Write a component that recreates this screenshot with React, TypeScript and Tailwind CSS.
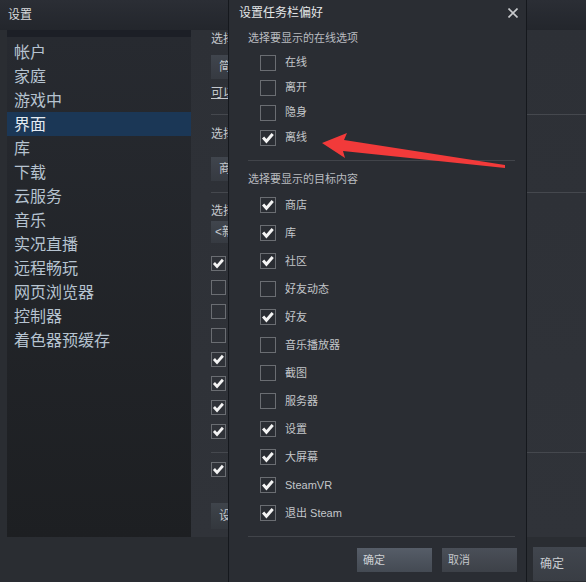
import React from "react";

const FONT = "font-['Liberation_Sans','Noto_Sans_CJK_SC',sans-serif]";

const sidebarItems = [
  "帐户",
  "家庭",
  "游戏中",
  "界面",
  "库",
  "下载",
  "云服务",
  "音乐",
  "实况直播",
  "远程畅玩",
  "网页浏览器",
  "控制器",
  "着色器预缓存",
];

const onlineOptions = [
  { label: "在线", checked: false },
  { label: "离开", checked: false },
  { label: "隐身", checked: false },
  { label: "离线", checked: true },
];

const targetOptions = [
  { label: "商店", checked: true },
  { label: "库", checked: true },
  { label: "社区", checked: true },
  { label: "好友动态", checked: false },
  { label: "好友", checked: true },
  { label: "音乐播放器", checked: false },
  { label: "截图", checked: false },
  { label: "服务器", checked: false },
  { label: "设置", checked: true },
  { label: "大屏幕", checked: true },
  { label: "SteamVR", checked: true },
  { label: "退出 Steam", checked: true },
];

const backChecks = [true, false, false, false, true, true, true, true];

const CheckBox: React.FC<{ checked: boolean; small?: boolean }> = ({
  checked,
  small,
}) => (
  <div
    className={`${
      small ? "w-[15px] h-[15px]" : "w-[16px] h-[16px]"
    } shrink-0 border border-[#6a6d72] flex items-center justify-center`}
  >
    {checked && (
      <svg viewBox="0 0 16 16" className="w-full h-full">
        <path
          d="M2.4 7.4 L6.2 11.6 L13.4 3.4"
          fill="none"
          stroke="#f4f4f4"
          strokeWidth="3.4"
          strokeLinejoin="miter"
        />
      </svg>
    )}
  </div>
);

const BackWindow: React.FC = () => (
  <div className="flex flex-col h-full">
    <div className="h-[30px] shrink-0 flex items-center px-[8px] text-[12px] text-[#d8dadd] bg-gradient-to-b from-[#2b2e35] to-[#23262c]">
      设置
    </div>
    <div className="flex flex-1 min-h-0">
      <div className="ml-[7px] w-[184px] shrink-0 flex flex-col border-t-[7px] border-[#1c1f26] bg-gradient-to-b from-[#272a30] to-[#1d1f22] pt-[3px]">
        {sidebarItems.map((item) => (
          <div
            key={item}
            className={`h-[24px] flex items-center px-[7px] pt-[2px] text-[16px] leading-none ${
              item === "界面"
                ? "bg-[#1b3756] text-[#e4ebf2]"
                : "text-[#b6c3d0]"
            }`}
          >
            {item}
          </div>
        ))}
      </div>
      <div className="flex-1 min-w-0 bg-gradient-to-b from-[#2d3036] to-[#303339] pl-[20px] flex flex-col text-[12px] text-[#c4c8cc] overflow-hidden">
        <div className="h-[18px] flex items-center">选择</div>
        <div className="mt-[7px] h-[24px] w-[300px] flex items-center pl-[8px] bg-gradient-to-b from-[#40454d] to-[#363a41]">
          简体
        </div>
        <div className="mt-[7px] h-[14px] flex items-center underline">
          可以
        </div>
        <div className="mt-[14px] h-px bg-[#45484e]" />
        <div className="mt-[10px] h-[18px] flex items-center">选择</div>
        <div className="mt-[14px] h-[24px] w-[300px] flex items-center pl-[8px] bg-gradient-to-b from-[#40454d] to-[#363a41]">
          商店
        </div>
        <div className="mt-[11px] h-px bg-[#45484e]" />
        <div className="mt-[9px] h-[18px] flex items-center">选择</div>
        <div className="mt-px h-[22px] w-[300px] flex items-center pl-[4px] bg-gradient-to-b from-[#40454d] to-[#363a41]">
          &lt;新
        </div>
        <div className="mt-[8px] flex flex-col">
          {backChecks.map((c, i) => (
            <div key={i} className="h-[24px] flex items-center">
              <CheckBox checked={c} small />
            </div>
          ))}
        </div>
        <div className="mt-[9px] h-px bg-[#45484e]" />
        <div className="mt-[4px] h-[24px] flex items-center">
          <CheckBox checked small />
        </div>
        <div className="mt-[22px] h-[26px] w-[200px] flex items-center pl-[8px] bg-gradient-to-b from-[#3f444b] to-[#33373d]">
          设置
        </div>
      </div>
    </div>
    <div className="h-[45px] shrink-0 flex justify-end pt-[10px]">
      <div className="h-[34px] w-[53px] flex items-center pl-[7px] text-[12px] text-[#c9cdd1] bg-gradient-to-b from-[#41464e] to-[#393d44]">
        确定
      </div>
    </div>
  </div>
);

const Row: React.FC<{ label: string; checked: boolean; h: string }> = ({
  label,
  checked,
  h,
}) => (
  <div className={`${h} flex items-center pl-[31px] gap-[9px]`}>
    <CheckBox checked={checked} />
    <span className="text-[11px] text-[#c3c6ca] leading-none">{label}</span>
  </div>
);

const Dialog: React.FC = () => (
  <div className="absolute left-[228px] top-0 w-[299px] h-[582px] bg-[#2a2d33] border-x border-[#15181d] flex flex-col">
    <div className="h-[26px] flex items-center justify-between pl-[10px] pr-[8px]">
      <span className="text-[12px] text-[#e4e6e8] leading-none">
        设置任务栏偏好
      </span>
      <svg viewBox="0 0 10 10" className="w-[10px] h-[10px]">
        <path
          d="M0.5 0.5 L9.5 9.5 M9.5 0.5 L0.5 9.5"
          stroke="#c8cacd"
          strokeWidth="1.6"
        />
      </svg>
    </div>
    <div className="h-[24px] flex items-center pl-[19px] text-[11px] text-[#b9bcc0] leading-none">
      选择要显示的在线选项
    </div>
    {onlineOptions.map((o) => (
      <Row key={o.label} label={o.label} checked={o.checked} h="h-[25px]" />
    ))}
    <div className="mt-[10px] ml-[19px] mr-[11px] h-px bg-[#41444a]" />
    <div className="mt-[6px] h-[24px] flex items-center pl-[19px] text-[11px] text-[#b9bcc0] leading-none">
      选择要显示的目标内容
    </div>
    {targetOptions.map((o) => (
      <Row key={o.label} label={o.label} checked={o.checked} h="h-[28px]" />
    ))}
    <div className="mt-[9px] ml-[19px] mr-[11px] h-px bg-[#41444a]" />
    <div className="mt-[11px] flex justify-end gap-[10px] pr-[9px]">
      <div className="w-[75px] h-[24px] flex items-center pl-[6px] text-[11px] text-[#cdd0d4] bg-gradient-to-b from-[#565d68] to-[#444a53]">
        确定
      </div>
      <div className="w-[75px] h-[24px] flex items-center pl-[6px] text-[11px] text-[#c3c6ca] bg-gradient-to-b from-[#4a4f58] to-[#3d4148]">
        取消
      </div>
    </div>
  </div>
);

const Arrow: React.FC = () => (
  <svg
    className="absolute left-0 top-0 pointer-events-none"
    width="586"
    height="582"
    viewBox="0 0 586 582"
  >
    <polygon
      points="322,143 347,133 344,140 505,165 505,168 343,151 345,158"
      fill="#f23a3a"
    />
  </svg>
);

export default function App() {
  return (
    <div
      className={`relative w-[586px] h-[582px] overflow-hidden bg-[#2a2d32] ${FONT}`}
    >
      <BackWindow />
      <Dialog />
      <Arrow />
    </div>
  );
}
